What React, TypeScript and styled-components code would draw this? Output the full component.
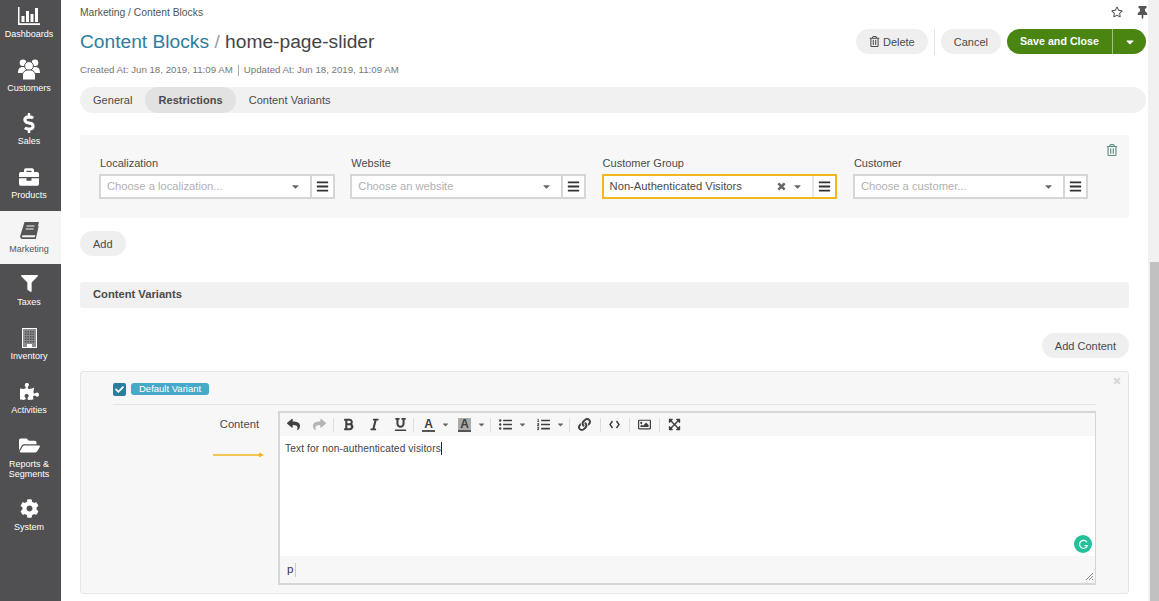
import React from "react";
import styled, { createGlobalStyle } from "styled-components";
import {
  FaBold,
  FaBriefcase,
  FaCaretDown,
  FaCheck,
  FaCog,
  FaDollarSign,
  FaExpandArrowsAlt,
  FaFilter,
  FaFolderOpen,
  FaItalic,
  FaLink,
  FaListOl,
  FaListUl,
  FaPuzzlePiece,
  FaBars,
  FaRegImage,
  FaRegStar,
  FaRegTrashAlt,
  FaReply,
  FaShare,
  FaThumbtack,
  FaUnderline,
} from "react-icons/fa";

const GlobalStyle = createGlobalStyle`
  html, body {
    margin: 0;
    padding: 0;
    height: 601px;
    overflow: hidden;
    background: #fff;
    font-family: "Liberation Sans", Arial, sans-serif;
    color: #4a4a4a;
  }
`;

const Page = styled.div`
  display: flex;
  width: 1159px;
  height: 601px;
  overflow: hidden;
`;

const Sidebar = styled.nav`
  width: 61px;
  flex: none;
  background: #505052;
  display: flex;
  flex-direction: column;
  align-items: stretch;
  margin-top: -4px;
`;

const NavItem = styled.div<{ $active?: boolean; $tall?: boolean }>`
  height: ${({ $tall }) => ($tall ? "63.7px" : "53.7px")};
  flex: none;
  display: flex;
  flex-direction: column;
  align-items: center;
  padding: 9px 3px 0 0;
  box-sizing: border-box;
  background: ${({ $active }) => ($active ? "#f5f5f5" : "transparent")};
  color: ${({ $active }) => ($active ? "#555" : "#fff")};
  font-size: 9px;
  line-height: 10px;
  text-align: center;
`;

const NavIcon = styled.div`
  height: 21px;
  display: flex;
  align-items: center;
  justify-content: center;
  margin-bottom: 3px;
`;

const Main = styled.main`
  flex: 1;
  min-width: 0;
  padding: 0 2px 0 19px;
  display: flex;
  flex-direction: column;
`;

const TopRow = styled.div`
  height: 24px;
  display: flex;
  align-items: center;
  justify-content: space-between;
  font-size: 10.3px;
  color: #555;
`;

const TopIcons = styled.div`
  display: flex;
  align-items: center;
  gap: 13px;
  font-size: 13px;
  color: #555;
  margin-right: -3px;
`;

const HeaderRow = styled.div`
  height: 35px;
  display: flex;
  align-items: center;
  justify-content: space-between;
`;

const Title = styled.h1`
  margin: 0;
  font-size: 19.2px;
  font-weight: 400;
  color: #444;
`;

const TitleLink = styled.span`
  color: #2e7d9f;
`;

const TitleSlash = styled.span`
  color: #9a9a9a;
`;

const Actions = styled.div`
  display: flex;
  align-items: center;
`;

const Pill = styled.button`
  height: 25px;
  padding: 0 13px;
  border: 0;
  border-radius: 13px;
  background: #efefef;
  color: #4a4a4a;
  font: 11px "Liberation Sans", Arial, sans-serif;
  display: inline-flex;
  align-items: center;
  gap: 3px;
`;

const ActionDivider = styled.span`
  width: 1px;
  height: 26px;
  background: #e4e4e4;
  margin: 0 6px;
`;

const SaveGroup = styled.div`
  display: flex;
  height: 25px;
  margin-left: 6px;
  border-radius: 13px;
  background: #4a8512;
  color: #fff;
  font-size: 10.7px;
  font-weight: 700;
  align-items: center;
  overflow: hidden;
`;

const SaveLabel = styled.span`
  padding: 0 13px;
  line-height: 25px;
  border-right: 1px solid #a4c288;
`;

const SaveCaret = styled.span`
  width: 33px;
  display: flex;
  justify-content: center;
  font-size: 12px;
`;

const Meta = styled.div`
  margin-top: 5px;
  font-size: 9.7px;
  line-height: 12px;
  color: #777;
  display: flex;
  align-items: center;
`;

const MetaDivider = styled.span`
  width: 1px;
  height: 11px;
  background: #aaa;
  margin: 0 5px;
`;

const Tabs = styled.div`
  margin-top: 11px;
  height: 26px;
  border-radius: 13px;
  background: #f1f1f1;
  display: flex;
  font-size: 11px;
`;

const Tab = styled.div<{ $active?: boolean }>`
  padding: 0 13px;
  line-height: 26px;
  border-radius: 13px;
  background: ${({ $active }) => ($active ? "#e2e2e2" : "transparent")};
  font-weight: ${({ $active }) => ($active ? 700 : 400)};
  letter-spacing: 0.05px;
`;

const Sections = styled.div`
  margin-right: 17px;
  display: flex;
  flex-direction: column;
`;

const RestrictionCard = styled.section`
  position: relative;
  margin-top: 22px;
  height: 83px;
  box-sizing: border-box;
  background: #f7f7f7;
  border-radius: 3px;
  padding: 22px 0 0 19px;
  display: flex;
  gap: 15.8px;
`;

const CardTrash = styled.span`
  position: absolute;
  top: 9px;
  right: 11px;
  font-size: 12px;
  color: #5d8f82;
`;

const Field = styled.div`
  width: 235.5px;
  flex: none;
`;

const FieldLabel = styled.div`
  font-size: 11px;
  line-height: 13px;
  margin-bottom: 4px;
  padding-left: 1px;
  color: #4a4a4a;
`;

const SelectBox = styled.div<{ $focus?: boolean }>`
  height: 25px;
  display: flex;
  box-sizing: border-box;
  border: 2px solid ${({ $focus }) => ($focus ? "#f3b71e" : "#d6d6d6")};
  background: #fff;
  font-size: 11.2px;
`;

const SelectText = styled.div<{ $placeholder?: boolean }>`
  flex: 1;
  padding-left: 6px;
  line-height: 21px;
  color: ${({ $placeholder }) => ($placeholder ? "#b0b0b0" : "#4a4a4a")};
`;

const SelectIcons = styled.div`
  display: flex;
  align-items: center;
  gap: 6px;
  padding-right: 9px;
  color: #666;
`;

const MenuSquare = styled.div<{ $focus?: boolean }>`
  width: 23px;
  flex: none;
  border-left: 2px solid ${({ $focus }) => ($focus ? "#e8e8e8" : "#d6d6d6")};
  display: flex;
  align-items: center;
  justify-content: center;
  font-size: 13px;
  color: #333;
  box-sizing: border-box;
`;

const AddRow = styled.div`
  margin-top: 13px;
`;

const SectionBar = styled.div`
  margin-top: 26px;
  height: 26px;
  line-height: 25px;
  background: #f1f1f1;
  border-radius: 3px;
  padding-left: 13px;
  font-size: 11.2px;
  font-weight: 700;
`;

const RightRow = styled.div`
  margin-top: 25px;
  display: flex;
  justify-content: flex-end;
`;

const VariantCard = styled.section`
  position: relative;
  margin-top: 13px;
  height: 223px;
  box-sizing: border-box;
  background: #f7f7f7;
  border: 1px solid #e6e6e6;
  border-radius: 3px;
  padding: 11px 0 0 32px;
`;

const CloseX = styled.span`
  position: absolute;
  top: 5px;
  right: 7px;
  display: flex;
  color: #d8d8d8;
`;

const VariantHead = styled.div`
  display: flex;
  align-items: flex-start;
  gap: 5px;
  height: 22px;
  box-sizing: border-box;
  margin-right: 32px;
  border-bottom: 1px solid #e6e6e6;
`;

const Check = styled.span`
  width: 13px;
  height: 13px;
  border-radius: 2px;
  background: #2a7d9f;
  color: #fff;
  display: flex;
  align-items: center;
  justify-content: center;
  font-size: 9px;
`;

const Badge = styled.span`
  height: 12px;
  line-height: 12px;
  padding: 0 8px;
  border-radius: 3px;
  background: #46a9c7;
  color: #fff;
  font-size: 9.5px;
`;

const ContentRow = styled.div`
  display: flex;
  margin-top: 6px;
`;

const ContentLabelCol = styled.div`
  width: 165px;
  flex: none;
  position: relative;
  font-size: 11.2px;
  text-align: right;
  padding: 7px 19px 0 0;
  box-sizing: border-box;
`;

const Arrow = styled.svg`
  position: absolute;
  left: 100px;
  top: 40px;
`;

const Editor = styled.div`
  width: 818px;
  height: 174px;
  box-sizing: border-box;
  border: 2px solid #d6d6d6;
  border-right-width: 1px;
  display: flex;
  flex-direction: column;
  background: #fff;
`;

const Toolbar = styled.div`
  height: 23px;
  flex: none;
  background: #f7f7f7;
  display: flex;
  align-items: center;
  padding-left: 7px;
  font-size: 13px;
  color: #404040;
`;

const Tool = styled.span<{ $muted?: boolean; $width: number }>`
  width: ${({ $width }) => $width}px;
  flex: none;
  display: flex;
  align-items: center;
  gap: 6px;
  color: ${({ $muted }) => ($muted ? "#b5b5b5" : "inherit")};
`;

const ToolCaret = styled(FaCaretDown)`
  font-size: 9px;
  color: #666;
`;

const ToolSep = styled.span`
  width: 1px;
  height: 14px;
  background: #ddd;
  margin-right: 8px;
  flex: none;
`;

const ColorA = styled.span<{ $fill?: boolean }>`
  width: 13px;
  text-align: center;
  font-weight: 700;
  font-size: 12px;
  line-height: 12px;
  border-bottom: 2px solid #555;
  background: ${({ $fill }) => ($fill ? "#aaa" : "transparent")};
`;

const EditorBody = styled.div`
  flex: 1;
  position: relative;
  padding: 6px 5px;
  font: 10.2px/13px "Liberation Sans", sans-serif;
  letter-spacing: 0.1px;
  color: #444;
`;

const Caret = styled.span`
  display: inline-block;
  width: 1px;
  height: 13px;
  background: #222;
  vertical-align: top;
`;

const GrammarlyDot = styled.span`
  position: absolute;
  right: 3px;
  bottom: 3px;
  width: 18px;
  height: 18px;
  border-radius: 50%;
  background: #22c197;
  display: flex;
  align-items: center;
  justify-content: center;
`;

const StatusBar = styled.div`
  position: relative;
  height: 27px;
  flex: none;
  background: #f7f7f7;
  font-size: 11.5px;
  line-height: 27px;
  padding-left: 7px;
  color: #333;
`;

const PathTick = styled.span`
  display: inline-block;
  width: 1px;
  height: 14px;
  background: #ccc;
  margin-left: 2px;
  vertical-align: middle;
`;

const Grip = styled.svg`
  position: absolute;
  right: 1px;
  bottom: 2px;
`;

const ScrollTrack = styled.div`
  width: 11px;
  flex: none;
  background: #f1f1f1;
  padding: 262px 0 0 2px;
  box-sizing: border-box;
`;

const ScrollThumb = styled.div`
  height: 339px;
  background: #c1c1c1;
`;

const ChartIcon = () => (
  <svg width="22" height="18" viewBox="0 0 22 18" fill="#fff">
    <path d="M0 0h1.5v16.3H22V18H0z" />
    <rect x="3.5" y="9" width="3" height="6" />
    <rect x="8" y="4" width="3" height="11" />
    <rect x="12.5" y="7" width="3" height="8" />
    <rect x="17" y="1" width="3" height="14" />
  </svg>
);

const UsersIcon = () => (
  <svg width="22" height="21" viewBox="0 0 22 21" fill="#fff">
    <circle cx="5" cy="3.8" r="3.3" />
    <circle cx="17" cy="3.8" r="3.3" />
    <path d="M0 14c0-4 1.5-6 5-6s5 2 5 6H0zM12 14c0-4 1.5-6 5-6s5 2 5 6h-10z" />
    <circle cx="11" cy="7" r="4.4" stroke="#505052" strokeWidth="1" />
    <path
      d="M4.5 21v-4c0-4 2-6 6.5-6s6.5 2 6.5 6v4z"
      stroke="#505052"
      strokeWidth="1"
    />
  </svg>
);

const BookIcon = () => (
  <svg width="19" height="17" viewBox="0 0 19 17" fill="#555">
    <path d="M4.5 0H19l-3.6 13.2H3.2c-1.6 0-1.6 2 0 2h11.6l3.4-12 .4 1.5L15.8 17H2.5C.6 17-.2 15.3.3 13.6z" />
    <path d="M6.5 4h8M5.7 7h8" stroke="#f5f5f5" strokeWidth="1" />
  </svg>
);

const BuildingIcon = () => (
  <svg width="15" height="20" viewBox="0 0 15 20">
    <rect x="0.5" y="0.5" width="14" height="19" fill="#8d8d90" stroke="#fff" />
    <g fill="#505052">
      {[3, 5.5, 8, 10.5].map((x) =>
        [3, 5.5, 8, 10.5, 13].map((y) => (
          <rect key={`${x}-${y}`} x={x} y={y} width="1.5" height="1.5" />
        ))
      )}
    </g>
    <path d="M5 19v-3h5v3z" fill="#fff" />
  </svg>
);

const BoldX = ({ size = 9 }: { size?: number }) => (
  <svg width={size} height={size} viewBox="0 0 10 10">
    <path
      d="M1.5 1.5l7 7M8.5 1.5l-7 7"
      stroke="currentColor"
      strokeWidth="2.8"
      fill="none"
    />
  </svg>
);

const CodeIcon = () => (
  <svg width="11" height="9" viewBox="0 0 11 9" fill="none">
    <path d="M3.5 1L1 4.5 3.5 8M7.5 1L10 4.5 7.5 8" stroke="#333" strokeWidth="1.3" />
  </svg>
);

const navItems = [
  { label: "Dashboards", icon: <ChartIcon /> },
  { label: "Customers", icon: <UsersIcon /> },
  { label: "Sales", icon: <FaDollarSign size={20} /> },
  { label: "Products", icon: <FaBriefcase size={20} /> },
  { label: "Marketing", icon: <BookIcon />, active: true },
  { label: "Taxes", icon: <FaFilter size={17} /> },
  { label: "Inventory", icon: <BuildingIcon /> },
  { label: "Activities", icon: <FaPuzzlePiece size={19} /> },
  { label: "Reports &\nSegments", icon: <FaFolderOpen size={21} />, tall: true },
  { label: "System", icon: <FaCog size={19} /> },
];

const fields = [
  { label: "Localization", placeholder: "Choose a localization..." },
  { label: "Website", placeholder: "Choose an website" },
  { label: "Customer Group", value: "Non-Authenticated Visitors" },
  { label: "Customer", placeholder: "Choose a customer..." },
];

const App = () => {
  return (
    <>
      <GlobalStyle />
      <Page>
        <Sidebar>
          {navItems.map((item) => (
            <NavItem key={item.label} $active={item.active} $tall={item.tall}>
              <NavIcon>{item.icon}</NavIcon>
              {item.label.split("\n").map((line) => (
                <div key={line}>{line}</div>
              ))}
            </NavItem>
          ))}
        </Sidebar>
        <Main>
          <TopRow>
            <span>Marketing / Content Blocks</span>
            <TopIcons>
              <FaRegStar size={12} />
              <FaThumbtack />
            </TopIcons>
          </TopRow>
          <HeaderRow>
            <Title>
              <TitleLink>Content Blocks</TitleLink> <TitleSlash>/</TitleSlash>{" "}
              home-page-slider
            </Title>
            <Actions>
              <Pill>
                <FaRegTrashAlt size={11} /> Delete
              </Pill>
              <ActionDivider />
              <Pill>Cancel</Pill>
              <SaveGroup>
                <SaveLabel>Save and Close</SaveLabel>
                <SaveCaret>
                  <FaCaretDown />
                </SaveCaret>
              </SaveGroup>
            </Actions>
          </HeaderRow>
          <Meta>
            Created At: Jun 18, 2019, 11:09 AM
            <MetaDivider />
            Updated At: Jun 18, 2019, 11:09 AM
          </Meta>
          <Tabs>
            <Tab>General</Tab>
            <Tab $active>Restrictions</Tab>
            <Tab>Content Variants</Tab>
          </Tabs>
          <Sections>
            <RestrictionCard>
              <CardTrash>
                <FaRegTrashAlt />
              </CardTrash>
              {fields.map((field) => (
                <Field key={field.label}>
                  <FieldLabel>{field.label}</FieldLabel>
                  <SelectBox $focus={!!field.value}>
                    <SelectText $placeholder={!field.value}>
                      {field.value ?? field.placeholder}
                    </SelectText>
                    <SelectIcons>
                      {field.value && <BoldX />}
                      <FaCaretDown size={11} />
                    </SelectIcons>
                    <MenuSquare $focus={!!field.value}>
                      <FaBars />
                    </MenuSquare>
                  </SelectBox>
                </Field>
              ))}
            </RestrictionCard>
            <AddRow>
              <Pill>Add</Pill>
            </AddRow>
            <SectionBar>Content Variants</SectionBar>
            <RightRow>
              <Pill>Add Content</Pill>
            </RightRow>
            <VariantCard>
              <CloseX>
                <BoldX size={8} />
              </CloseX>
              <VariantHead>
                <Check>
                  <FaCheck />
                </Check>
                <Badge>Default Variant</Badge>
              </VariantHead>
              <ContentRow>
                <ContentLabelCol>
                  Content
                  <Arrow width="52" height="8" viewBox="0 0 52 8">
                    <path d="M0 4h46" stroke="#f3b71e" strokeWidth="1.6" />
                    <path d="M46 1.5l5 2.5-5 2.5z" fill="#f3b71e" />
                  </Arrow>
                </ContentLabelCol>
                <Editor>
                  <Toolbar>
                    <Tool $width={26}>
                      <FaReply />
                    </Tool>
                    <Tool $muted $width={20}>
                      <FaShare />
                    </Tool>
                    <ToolSep />
                    <Tool $width={26}>
                      <FaBold />
                    </Tool>
                    <Tool $width={26}>
                      <FaItalic />
                    </Tool>
                    <Tool $width={19}>
                      <FaUnderline />
                    </Tool>
                    <ToolSep />
                    <Tool $width={36}>
                      <ColorA>A</ColorA>
                      <ToolCaret />
                    </Tool>
                    <Tool $width={32}>
                      <ColorA $fill>A</ColorA>
                      <ToolCaret />
                    </Tool>
                    <ToolSep />
                    <Tool $width={38}>
                      <FaListUl />
                      <ToolCaret />
                    </Tool>
                    <Tool $width={32}>
                      <FaListOl />
                      <ToolCaret />
                    </Tool>
                    <ToolSep />
                    <Tool $width={22}>
                      <FaLink />
                    </Tool>
                    <ToolSep />
                    <Tool $width={20}>
                      <CodeIcon />
                    </Tool>
                    <ToolSep />
                    <Tool $width={21}>
                      <FaRegImage />
                    </Tool>
                    <ToolSep />
                    <Tool $width={19}>
                      <FaExpandArrowsAlt />
                    </Tool>
                  </Toolbar>
                  <EditorBody>
                    Text for non-authenticated visitors
                    <Caret />
                    <GrammarlyDot>
                      <svg width="11" height="11" viewBox="0 0 11 11">
                        <path
                          d="M9 3.2A4 4 0 1 0 9.4 6.5H6.4"
                          fill="none"
                          stroke="#fff"
                          strokeWidth="1.2"
                        />
                      </svg>
                    </GrammarlyDot>
                  </EditorBody>
                  <StatusBar>
                    p
                    <PathTick />
                    <Grip width="9" height="9" viewBox="0 0 9 9">
                      <path
                        d="M1 8l7-7M4 8l4-4M7 8l1-1"
                        stroke="#888"
                        strokeWidth="1"
                      />
                    </Grip>
                  </StatusBar>
                </Editor>
              </ContentRow>
            </VariantCard>
          </Sections>
        </Main>
        <ScrollTrack>
          <ScrollThumb />
        </ScrollTrack>
      </Page>
    </>
  );
};

export default App;
